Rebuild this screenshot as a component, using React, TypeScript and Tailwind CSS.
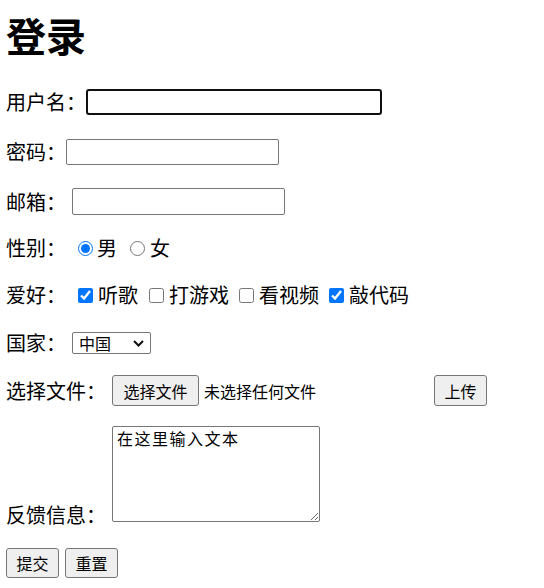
import React from 'react';

const label = "text-[20px] leading-[26px] text-black whitespace-nowrap";
const textBox = "h-full bg-white border border-[#767676] rounded-[2px] px-[2px] text-[16px] outline-none";
const btn = "h-full bg-[#efefef] border border-[#767676] rounded-[3px] text-[16px] text-black flex items-center justify-center";

function ChoiceLabel({ text, className }: { text: string; className: string }) {
  return <span className={`${label} ${className}`}>{text}</span>;
}

export default function App() {
  return (
    <div className="w-[544px] h-[588px] bg-white pl-[6px] font-['Noto_Sans_CJK_SC',sans-serif] text-black flex flex-col">
      <h1 className="mt-[15px] h-[40px] text-[40px] leading-[40px] font-bold">登录</h1>

      <form className="flex flex-col" onSubmit={e => e.preventDefault()}>
        <div className="mt-[34px] h-[26px] flex items-center">
          <span className={label}>用户名：</span>
          <input
            type="text"
            className="w-[296px] h-full bg-white border-2 border-[#101010] rounded-[3px] text-[16px] outline-none"
          />
        </div>

        <div className="mt-[24px] h-[26px] flex items-center">
          <span className={label}>密码：</span>
          <input type="password" className={`${textBox} w-[213px]`} />
        </div>

        <div className="mt-[23px] h-[27px] flex items-center">
          <span className={label}>邮箱：</span>
          <input type="email" className={`${textBox} w-[213px] ml-[6px]`} />
        </div>

        <div className="mt-[20px] h-[26px] flex items-center">
          <span className={label}>性别：</span>
          <input type="radio" name="sex" defaultChecked className="ml-[12px] w-[15px] h-[15px] accent-[#0075ff]" />
          <ChoiceLabel text="男" className="ml-[4px]" />
          <input type="radio" name="sex" className="ml-[13px] w-[15px] h-[15px] accent-[#0075ff]" />
          <ChoiceLabel text="女" className="ml-[5px]" />
        </div>

        <div className="mt-[21px] h-[26px] flex items-center">
          <span className={label}>爱好：</span>
          <input type="checkbox" defaultChecked className="ml-[12px] w-[15px] h-[15px] accent-[#0075ff]" />
          <ChoiceLabel text="听歌" className="ml-[5px]" />
          <input type="checkbox" className="ml-[11px] w-[15px] h-[15px] accent-[#0075ff]" />
          <ChoiceLabel text="打游戏" className="ml-[5px]" />
          <input type="checkbox" className="ml-[10px] w-[15px] h-[15px] accent-[#0075ff]" />
          <ChoiceLabel text="看视频" className="ml-[5px]" />
          <input type="checkbox" defaultChecked className="ml-[10px] w-[15px] h-[15px] accent-[#0075ff]" />
          <ChoiceLabel text="敲代码" className="ml-[5px]" />
        </div>

        <div className="mt-[24px] h-[22px] flex items-center">
          <span className={label}>国家：</span>
          <div className="ml-[6px] w-[79px] h-full border border-[#767676] rounded-[2px] bg-white flex items-center justify-between pl-[6px] pr-[6px]">
            <span className="text-[16px] leading-[20px]">中国</span>
            <svg width="11" height="7" viewBox="0 0 11 7" fill="none">
              <polyline points="1,1 5.5,5.5 10,1" stroke="#111" strokeWidth="2" />
            </svg>
          </div>
        </div>

        <div className="mt-[21px] h-[31px] flex items-center">
          <span className={label}>选择文件：</span>
          <button type="button" className={`${btn} ml-[6px] w-[87px]`}>选择文件</button>
          <span className="ml-[5px] text-[16px] leading-[20px]">未选择任何文件</span>
          <button type="button" className={`${btn} ml-[118px] w-[53px]`}>上传</button>
        </div>

        <div className="mt-[20px] h-[96px] flex items-end">
          <span className={`${label} -mb-[6px]`}>反馈信息：</span>
          <textarea
            defaultValue="在这里输入文本"
            className="ml-[6px] w-[208px] h-full bg-white border border-[#767676] rounded-[2px] pl-[4px] pt-[1px] text-[16px] leading-[20px] tracking-[1.5px] outline-none"
          />
        </div>

        <div className="mt-[26px] h-[30px] flex items-center">
          <button type="submit" className={`${btn} w-[53px]`}>提交</button>
          <button type="reset" className={`${btn} ml-[6px] w-[53px]`}>重置</button>
        </div>
      </form>
    </div>
  );
}
